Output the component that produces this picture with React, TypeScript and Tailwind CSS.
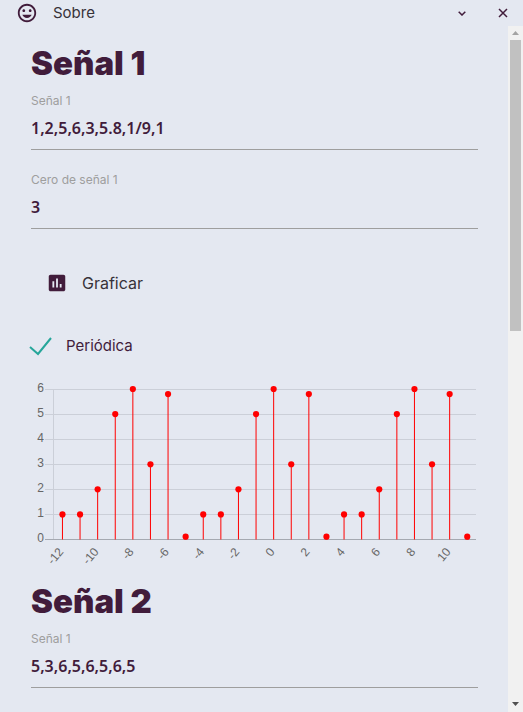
import { useState } from "react";
import { MdAssessment, MdInsertEmoticon } from "react-icons/md";

const PERIOD = [1, 1, 2, 5, 6, 3, 5.8, 1 / 9];
const SAMPLES = Array.from({ length: 24 }, (_, i) => ({ n: i - 12, value: PERIOD[i % 8] }));
const LEVELS = [0, 1, 2, 3, 4, 5, 6];

function StemChart() {
  const x = (i: number) => 22.65 + (i + 0.5) * 17.6;
  const y = (v: number) => 159.5 - v * 25.08;
  const gridY = (v: number) => Math.floor(y(v)) + 0.5;
  return (
    <svg viewBox="0 0 447 190" className="block w-full font-['Liberation_Sans',sans-serif] text-xs" role="img" aria-label="Señal 1">
      {LEVELS.map((v) => (
        <g key={v}>
          <line x1="14" x2="445" y1={gridY(v)} y2={gridY(v)} stroke={v === 0 ? "#a5a9b1" : "#cbcfd8"} />
          <text x="13" y={gridY(v) + 2.5} textAnchor="end" fill="#666">{v}</text>
        </g>
      ))}
      <line x1="22.5" x2="22.5" y1="9" y2="159" stroke="#cbcfd8" />
      {SAMPLES.map((s, i) => (
        <g key={s.n}>
          <rect x={x(i) - 0.5} y={y(s.value)} width="1" height={159.5 - y(s.value)} fill="#ff0000" />
          <circle cx={x(i)} cy={y(s.value)} r="3.1" fill="#ff0000" />
          {s.n % 2 === 0 && (
            <text
              transform={`translate(${x(i) - 1.5} 169.5) rotate(-50)`}
              dominantBaseline="central"
              textAnchor="end"
              fill="#666"
            >
              {s.n}
            </text>
          )}
        </g>
      ))}
    </svg>
  );
}

function Field({ id, label, initial }: { id: string; label: string; initial: string }) {
  const [value, setValue] = useState(initial);
  return (
    <div className="flex flex-col">
      <label htmlFor={id} className="text-xs leading-4 text-[#9e9e9e]">{label}</label>
      <input
        id={id}
        value={value}
        onChange={(e) => setValue(e.target.value)}
        className="h-[41px] w-full border-b border-[#9e9e9e] bg-transparent pb-[2px] font-['Noto_Sans',sans-serif] text-base font-semibold text-[#411c3b] outline-none"
      />
    </div>
  );
}

function Heading({ children }: { children: string }) {
  return <h1 className="text-[33px] leading-10 font-black text-[#411c3b]">{children}</h1>;
}

export default function App() {
  const [periodic, setPeriodic] = useState(true);
  return (
    <div className="flex h-screen flex-col overflow-hidden bg-[#e4e8f1] font-['Inter',sans-serif] text-[#411c3b]">
      <header className="flex h-[26px] shrink-0 items-center pr-[15px] pl-4">
        <MdInsertEmoticon size={22} />
        <span className="ml-[15px] text-[15px] leading-5 text-[#373239]">Sobre</span>
        <button aria-label="Minimizar" className="ml-auto flex h-5 w-5 items-center justify-center">
          <svg width="8" height="5" viewBox="0 0 8 5" fill="none" stroke="currentColor" strokeWidth="1.5">
            <path d="M.7.7 4 4 7.3.7" />
          </svg>
        </button>
        <button aria-label="Cerrar" className="ml-5 flex h-5 w-4 items-center justify-end">
          <svg width="10" height="10" viewBox="0 0 10 10" fill="none" stroke="currentColor" strokeWidth="1.5">
            <path d="m1 1 8 8M9 1 1 9" />
          </svg>
        </button>
      </header>
      <div className="flex min-h-0 flex-1">
        <main className="min-w-0 flex-1 overflow-hidden pt-[17px] pr-[30px] pl-[31px]">
          <Heading>Señal 1</Heading>
          <div className="mt-[10px] flex flex-col gap-[22px]">
            <Field id="signal-1" label="Señal 1" initial="1,2,5,6,3,5.8,1/9,1" />
            <Field id="zero-1" label="Cero de señal 1" initial="3" />
          </div>
          <button className="mt-9 flex h-9 items-center gap-[14px] px-[15px] text-base text-[#373239]">
            <MdAssessment size={22} className="text-[#411c3b]" />
            Graficar
          </button>
          <label className="mt-[33px] flex h-6 w-fit items-center gap-[13px] text-[15px]">
            <input
              type="checkbox"
              checked={periodic}
              onChange={(e) => setPeriodic(e.target.checked)}
              className="peer sr-only"
            />
            <svg width="22" height="20" viewBox="1 0 22 20" fill="none" stroke="#26a69a" strokeWidth="2" className="invisible overflow-visible peer-checked:visible">
              <path d="M0 11 8 18 21 2" />
            </svg>
            Periódica
          </label>
          <div className="mt-[22px]">
            <StemChart />
          </div>
          <div className="mt-[11px]">
            <Heading>Señal 2</Heading>
          </div>
          <div className="mt-[10px]">
            <Field id="signal-2" label="Señal 1" initial="5,3,6,5,6,5,6,5" />
          </div>
        </main>
        <div aria-hidden="true" className="flex w-[15px] shrink-0 flex-col items-center bg-[#f1f1f1]">
          <svg width="15" height="14" viewBox="0 0 15 14" className="shrink-0">
            <path d="M4 9h7L7.5 5z" fill="#a3a3a3" />
          </svg>
          <div className="min-h-0 w-full flex-1 px-[2px]">
            <div className="h-[44.2%] bg-[#c1c1c1]" />
          </div>
          <svg width="15" height="14" viewBox="0 0 15 14" className="shrink-0">
            <path d="M4 4h7L7.5 8z" fill="#505050" />
          </svg>
        </div>
      </div>
    </div>
  );
}
